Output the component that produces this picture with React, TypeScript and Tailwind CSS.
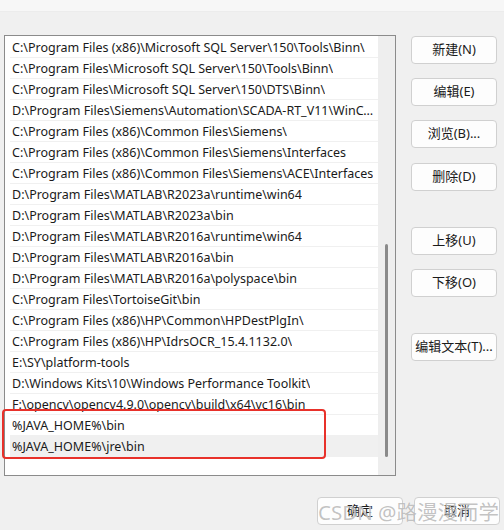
import React from "react";

const rows = [
  "C:\\Program Files (x86)\\Microsoft SQL Server\\150\\Tools\\Binn\\",
  "C:\\Program Files\\Microsoft SQL Server\\150\\Tools\\Binn\\",
  "C:\\Program Files\\Microsoft SQL Server\\150\\DTS\\Binn\\",
  "D:\\Program Files\\Siemens\\Automation\\SCADA-RT_V11\\WinCC\\bin",
  "C:\\Program Files (x86)\\Common Files\\Siemens\\",
  "C:\\Program Files (x86)\\Common Files\\Siemens\\Interfaces",
  "C:\\Program Files (x86)\\Common Files\\Siemens\\ACE\\Interfaces",
  "D:\\Program Files\\MATLAB\\R2023a\\runtime\\win64",
  "D:\\Program Files\\MATLAB\\R2023a\\bin",
  "D:\\Program Files\\MATLAB\\R2016a\\runtime\\win64",
  "D:\\Program Files\\MATLAB\\R2016a\\bin",
  "D:\\Program Files\\MATLAB\\R2016a\\polyspace\\bin",
  "C:\\Program Files\\TortoiseGit\\bin",
  "C:\\Program Files (x86)\\HP\\Common\\HPDestPlgIn\\",
  "C:\\Program Files (x86)\\HP\\IdrsOCR_15.4.1132.0\\",
  "E:\\SY\\platform-tools",
  "D:\\Windows Kits\\10\\Windows Performance Toolkit\\",
  "F:\\opencv\\opencv4.9.0\\opencv\\build\\x64\\vc16\\bin",
  "%JAVA_HOME%\\bin",
  "%JAVA_HOME%\\jre\\bin",
];

const font = {
  fontFamily: '"Noto Sans", "Noto Sans CJK SC", sans-serif',
};

function Btn({ label, className = "" }: { label: string; className?: string }) {
  return (
    <div
      className={
        "h-[28px] w-[86px] rounded-[4px] border border-[#d0d0d0] bg-[#fdfdfd] flex items-center justify-center text-[13px] text-[#1a1a1a] " +
        className
      }
    >
      {label}
    </div>
  );
}

export default function App() {
  return (
    <div
      className="relative w-[504px] h-[530px] overflow-hidden bg-[#f0f0f0] text-[#1a1a1a]"
      style={font}
    >
      {/* title bar */}
      <div className="h-[12px] bg-[#f7f7f7] overflow-hidden flex justify-between border-b border-[#ececec]">
        <div className="-mt-[13px] pl-[4px] text-[12px] leading-[16px] text-[#555]">编辑环境变量</div>
        <div className="-mt-[12px] pr-[8px] text-[12px] leading-[16px] text-[#777]">✕</div>
      </div>

      <div className="flex pt-[23px] pl-[4px]">
        {/* list box */}
        <div className="w-[392px] h-[441px] border border-[#8b8b8b] bg-white flex">
          <div className="w-[373px] pl-[5px] pt-[1px]">
            {rows.map((r, i) => (
              <div
                key={i}
                className={
                  "h-[21px] border-b border-[#f0f0f0] pl-[2px] pr-[3px] flex items-center text-[12.5px] leading-[21px] whitespace-nowrap overflow-hidden " +
                  (i === rows.length - 1 ? "bg-[#f0f0f0]" : "")
                }
              >
                <span className="truncate">{r}</span>
              </div>
            ))}
          </div>
          <div className="w-[17px] h-full bg-[#eeeeee] flex justify-center pt-[208px] pb-[17px]">
            <div className="w-[3px] h-[213px] rounded-full bg-[#8a8a8a]" />
          </div>
        </div>

        {/* side buttons */}
        <div className="ml-[15px] pt-[1px] flex flex-col">
          <Btn label="新建(N)" />
          <Btn label="编辑(E)" className="mt-[14px]" />
          <Btn label="浏览(B)..." className="mt-[14px]" />
          <Btn label="删除(D)" className="mt-[15px]" />
          <Btn label="上移(U)" className="mt-[36px]" />
          <Btn label="下移(O)" className="mt-[14px]" />
          <Btn label="编辑文本(T)..." className="mt-[36px]" />
        </div>
      </div>

      {/* bottom buttons */}
      <div className="flex pt-[21px] pl-[317px] gap-[11px]">
        <Btn label="确定" className="w-[84px]" />
        <Btn label="取消" className="w-[84px]" />
      </div>

      {/* red highlight */}
      <div className="absolute left-[2px] top-[409px] w-[324px] h-[50px] border-2 border-[#e8312a] rounded-[4px]" />

      {/* watermark */}
      <div
        className="absolute left-[318px] top-[499px] text-[20.5px] leading-[26px] text-[rgba(120,120,120,0.45)] whitespace-nowrap"
        style={{ textShadow: "0 0 1px rgba(255,255,255,0.9)" }}
      >
        CSDN @路漫漫而学
      </div>
    </div>
  );
}
